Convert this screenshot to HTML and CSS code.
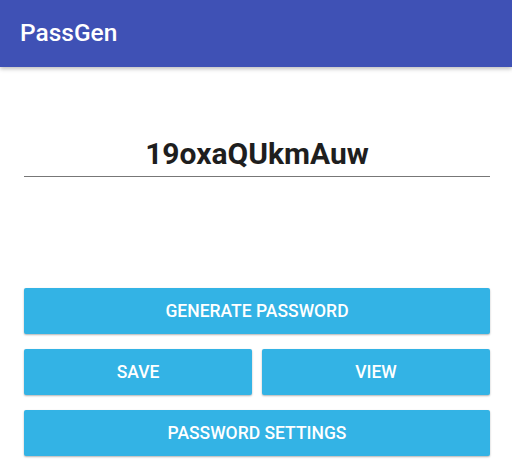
FILE: index.html
```html
<!DOCTYPE html>
<html>
<head>
<meta charset="utf-8">
<link rel="stylesheet" href="styles.css">
</head>
<body>
<header class="appbar"><span class="title">PassGen</span></header>
<main class="content">
  <div class="field"><span class="password">19oxaQUkmAuw</span></div>
  <div class="actions">
    <button class="btn">Generate Password</button>
    <div class="row">
      <button class="btn">Save</button>
      <button class="btn">View</button>
    </div>
    <button class="btn">Password Settings</button>
  </div>
</main>
</body>
</html>
```
FILE: styles.css
```css
* { box-sizing: border-box; }
html, body { margin: 0; padding: 0; background: #fff; }
body { width: 512px; height: 468px; overflow: hidden; font-family: Roboto, "Liberation Sans", sans-serif; }
.appbar {
  height: 67px;
  background: #3F51B5;
  display: flex;
  align-items: center;
  padding-left: 20px;
  box-shadow: 0 2px 4px rgba(0,0,0,0.25);
  position: relative;
  z-index: 1;
}
.title { color: #fff; font-size: 24.5px; font-weight: 500; line-height: 1; }
.content { padding: 0 22px 0 24px; }
.field {
  margin-top: 66px;
  height: 44px;
  border-bottom: 1px solid #777;
  display: flex;
  align-items: flex-end;
  justify-content: center;
  padding-bottom: 7px;
}
.password { font-size: 30px; font-weight: 700; color: #1e1e1e; line-height: 1; }
.actions { margin-top: 111px; display: flex; flex-direction: column; gap: 15px; }
.row { display: flex; gap: 10px; }
.row .btn { flex: 1; }
.btn {
  height: 46px;
  border: none;
  border-radius: 2px;
  background: #33B3E5;
  color: #fff;
  font-family: Roboto, "Liberation Sans", sans-serif;
  font-size: 17.5px;
  font-weight: 500;
  text-transform: uppercase;
  box-shadow: 0 1px 2px rgba(0,0,0,0.3);
  padding: 0;
}
```
